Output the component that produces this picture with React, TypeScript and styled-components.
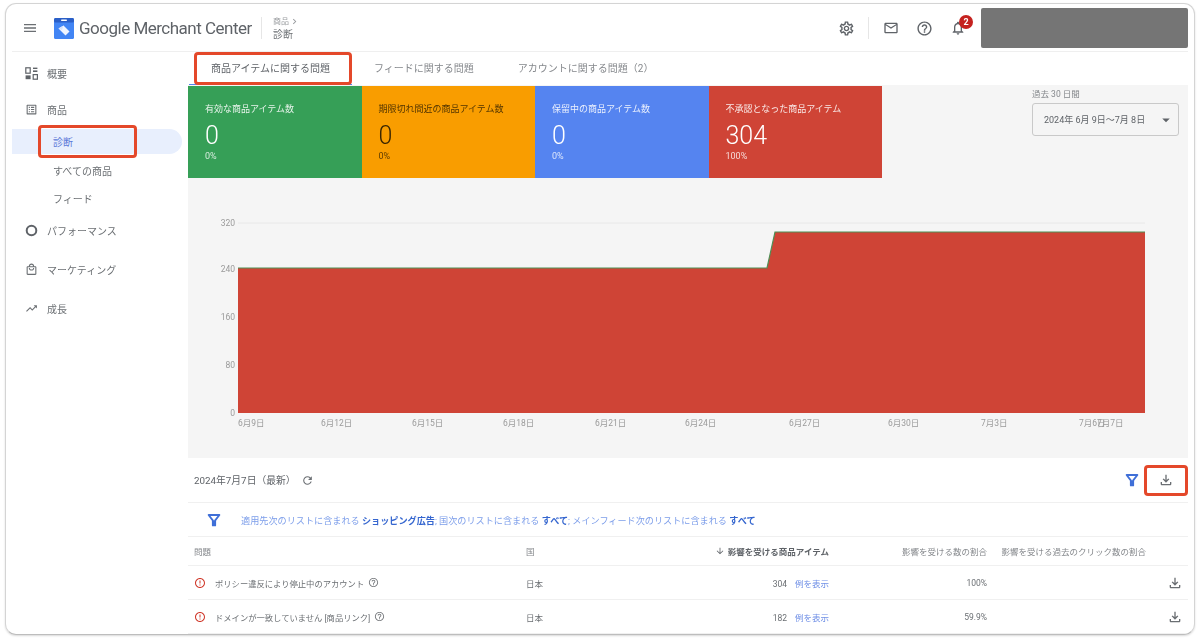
import React from 'react';
import styled, { createGlobalStyle } from 'styled-components';
import {
  MdMenu,
  MdOutlineSettings,
  MdMailOutline,
  MdHelpOutline,
  MdOutlineNotifications,
  MdListAlt,
  MdOutlineLocalMall,
  MdTrendingUp,
  MdArrowDropDown,
  MdArrowDownward,
  MdRefresh,
  MdOutlineFileDownload,
  MdErrorOutline,
  MdChevronRight,
} from 'react-icons/md';

const GlobalStyle = createGlobalStyle`
  html, body {
    margin: 0;
    padding: 0;
    background: #fff;
    font-family: Roboto, "Noto Sans CJK JP", sans-serif;
    color: #5f6368;
  }
  * { box-sizing: border-box; }
`;

const Page = styled.div`
  width: 1200px;
  height: 642px;
  padding: 3px 5px 7px 5px;
  overflow: hidden;
`;

const Frame = styled.div`
  height: 632px;
  padding: 1px 6px 0;
  border: 1px solid #d4d4d4;
  border-bottom-color: #bdbdbd;
  border-radius: 11px;
  box-shadow: 0 1px 2px rgba(0, 0, 0, 0.15);
  overflow: hidden;
  filter: blur(0.3px);
`;

const Header = styled.header`
  height: 47px;
  display: flex;
  align-items: center;
  border-bottom: 1px solid #efefef;
  padding-left: 10px;
`;

const MenuButton = styled.div`
  width: 16px;
  display: flex;
  margin-right: 16px;
  color: #6b6f73;
`;

const Brand = styled.div`
  font-family: Roboto, "Open Sans", sans-serif;
  font-size: 17px;
  letter-spacing: -0.5px;
  color: #5f6368;
  margin-left: 5px;
  white-space: nowrap;
  width: 182px;
`;

const VDivider = styled.div<{ $h: number }>`
  width: 1px;
  height: ${p => p.$h}px;
  background: #e6e6e6;
`;

const Crumbs = styled.div`
  margin-left: 11px;
  display: flex;
  flex-direction: column;
  gap: 2px;
`;

const CrumbTop = styled.div`
  font-size: 8px;
  color: #9a9da0;
  display: flex;
  align-items: center;
  line-height: 11px;
`;

const CrumbCurrent = styled.div`
  font-size: 10px;
  color: #6b6f73;
  line-height: 12px;
`;

const HeaderTools = styled.div`
  margin-left: auto;
  display: flex;
  align-items: center;
  color: #5f6368;
`;

const ToolIcon = styled.div<{ $ml: number }>`
  margin-left: ${p => p.$ml}px;
  display: flex;
  position: relative;
`;

const Badge = styled.span`
  position: absolute;
  top: -5px;
  right: -7px;
  width: 14px;
  height: 14px;
  border-radius: 50%;
  background: #c5221f;
  color: #fff;
  font-size: 9px;
  font-weight: 700;
  display: flex;
  align-items: center;
  justify-content: center;
`;

const AccountBox = styled.div`
  width: 207px;
  height: 40px;
  background: #757575;
  border-radius: 2px;
  margin-left: 15px;
`;

const Body = styled.div`
  display: flex;
  height: 583px;
`;

const Sidebar = styled.nav`
  width: 176px;
  flex: none;
  padding: 3px 6px 0 0;
`;

const NavItem = styled.div<{ $h?: number }>`
  height: ${p => p.$h ?? 36}px;
  display: flex;
  align-items: center;
  padding-left: 13px;
  gap: 9px;
  font-size: 10px;
  color: #6b6f73;
`;

const SubItem = styled.div<{ $active?: boolean; $h: number }>`
  position: relative;
  height: ${p => p.$h}px;
  margin: ${p => (p.$active ? '2px 0' : '0')};
  display: flex;
  align-items: center;
  padding-left: 41px;
  font-size: 10px;
  color: ${p => (p.$active ? '#5b78d8' : '#6b6f73')};
  background: ${p => (p.$active ? '#e8effd' : 'transparent')};
  border-radius: ${p => (p.$active ? '0 13px 13px 0' : '0')};
`;

const Highlight = styled.div`
  position: absolute;
  border: 3px solid #e4482a;
  border-radius: 4px;
  pointer-events: none;
`;

const SideHighlight = styled(Highlight)`
  left: 26px;
  top: -4px;
  width: 99px;
  height: 33px;
`;

const Main = styled.main`
  width: 1000px;
  display: flex;
  flex-direction: column;
`;

const Tabs = styled.div`
  height: 33px;
  display: flex;
  padding-left: 1px;
  background: #fff;
`;

const Tab = styled.div<{ $active?: boolean }>`
  position: relative;
  padding: 0 22px 2px;
  display: flex;
  align-items: center;
  font-size: 10px;
  color: ${p => (p.$active ? '#5f6368' : '#85888c')};
  box-shadow: ${p => (p.$active ? 'inset 0 -1px 0 #5584f0' : 'none')};
`;

const TabHighlight = styled(Highlight)`
  left: 5px;
  right: 0;
  top: 0;
  bottom: 0;
`;

const GrayPanel = styled.section`
  height: 373px;
  background: #f5f5f5;
  display: flex;
  flex-direction: column;
`;

const TopRow = styled.div`
  height: 93px;
  flex: none;
  display: flex;
  justify-content: space-between;
  padding: 1px 9px 0 0;
`;

const Tiles = styled.div`
  display: flex;
`;

const Tile = styled.div<{ $bg: string; $fg: string }>`
  width: 173.5px;
  height: 92px;
  background: ${p => p.$bg};
  color: ${p => p.$fg};
  padding: 17px 0 0 17px;
`;

const TileLabel = styled.div`
  font-size: 9px;
  line-height: 12px;
  opacity: 0.88;
`;

const TileValue = styled.div`
  font-size: 25px;
  font-weight: 300;
  line-height: 26px;
  margin-top: 8px;
`;

const TilePct = styled.div`
  font-size: 9px;
  line-height: 11px;
  opacity: 0.8;
  margin-top: 2px;
`;

const RangeCol = styled.div`
  width: 147px;
  padding-top: 2px;
`;

const RangeLabel = styled.div`
  font-size: 8.5px;
  line-height: 12px;
  color: #85888c;
  margin-bottom: 3px;
`;

const RangeSelect = styled.div`
  height: 33px;
  border: 1px solid #c9c9c9;
  border-radius: 3px;
  display: flex;
  align-items: center;
  padding-left: 11px;
  font-size: 9px;
  color: #5f6368;
  white-space: nowrap;
  gap: 12px;
`;

const Chart = styled.svg`
  display: block;
  width: 1000px;
  height: 280px;
`;

const AxisLabel = styled.text`
  font-size: 8.5px;
  fill: #9a9a9a;
`;

const Toolbar = styled.div`
  height: 45px;
  flex: none;
  display: flex;
  align-items: center;
  padding-left: 6px;
  border-bottom: 1px solid #f0f0f0;
  font-size: 9.8px;
  color: #5f6368;
`;

const RefreshIcon = styled(MdRefresh)`
  margin-left: 5px;
  color: #6b6f73;
`;

const ToolbarRight = styled.div`
  margin-left: auto;
  display: flex;
  align-items: center;
  gap: 4px;
`;

const DownloadButton = styled.div`
  width: 44px;
  height: 31px;
  border: 3px solid #e4482a;
  border-radius: 4px;
  display: flex;
  align-items: center;
  justify-content: center;
  color: #6b6f73;
`;

const FilterRow = styled.div`
  height: 34px;
  flex: none;
  display: flex;
  align-items: center;
  padding-left: 18px;
  gap: 19px;
  border-bottom: 1px solid #f0f0f0;
  font-size: 9.15px;
  color: #7d9eea;
  white-space: nowrap;
`;

const Strong = styled.b`
  color: #3566cf;
  font-weight: 700;
`;

const TableRow = styled.div<{ $h: number }>`
  height: ${p => p.$h}px;
  flex: none;
  display: grid;
  grid-template-columns: 332px 120px 183px 158px 159px 42px;
  align-items: center;
  padding-left: 6px;
  border-bottom: 1px solid #f0f0f0;
  font-size: 8.5px;
  color: #6b6f73;
  white-space: nowrap;
`;

const HeadCell = styled.div<{ $right?: boolean; $bold?: boolean }>`
  font-weight: ${p => (p.$bold ? 700 : 400)};
  color: ${p => (p.$bold ? '#5f6368' : '#85888c')};
  display: flex;
  align-items: center;
  justify-content: ${p => (p.$right ? 'flex-end' : 'flex-start')};
  gap: 3px;
`;

const IssueCell = styled.div`
  display: flex;
  align-items: center;
  gap: 9px;
  font-size: 8.3px;
`;

const ErrorIcon = styled(MdErrorOutline)`
  color: #d0392b;
`;

const HelpIcon = styled(MdHelpOutline)`
  color: #7a7d80;
  margin-left: -5px;
`;

const RightCell = styled.div`
  text-align: right;
`;

const ExampleLink = styled.span`
  color: #6f8fe6;
  margin-left: 8px;
`;

const RowDownload = styled.div`
  display: flex;
  justify-content: flex-end;
  padding-right: 5px;
  color: #6b6f73;
`;

const Logo: React.FC = () => (
  <svg width="20" height="21" viewBox="0 0 20 21">
    <rect x="0" y="0" width="20" height="21" rx="1.5" fill="#4285f4" />
    <rect x="0" y="0" width="20" height="4.5" rx="1.5" fill="#2b5fc7" />
    <rect x="7" y="1.6" width="6" height="1.4" rx="0.7" fill="#fff" />
    <path d="M4.5 10.5 L9.5 7.5 L15.5 13.5 L11.5 17.5 Z" fill="#fff" opacity="0.92" />
    <path d="M4.5 10.5 L9.5 7.5 L8 12 Z" fill="#d6e2fb" />
  </svg>
);

const OverviewIcon: React.FC = () => (
  <svg width="13" height="13" viewBox="0 0 13 13" fill="none" stroke="#5f6368" strokeWidth="1.2">
    <rect x="0.8" y="0.8" width="4.4" height="5.4" />
    <rect x="8" y="0.6" width="4.4" height="1.4" fill="#5f6368" stroke="none" />
    <rect x="8" y="3.4" width="4.4" height="1.6" fill="#5f6368" stroke="none" />
    <rect x="0.6" y="8.4" width="5" height="3.8" fill="#5f6368" stroke="none" />
    <rect x="8.2" y="7.6" width="4.2" height="4.6" />
  </svg>
);

const RingIcon: React.FC = () => (
  <svg width="13" height="13" viewBox="0 0 13 13">
    <circle cx="6.5" cy="6.5" r="4.8" fill="none" stroke="#5f6368" strokeWidth="2" />
  </svg>
);

const FunnelIcon: React.FC = () => (
  <svg width="16" height="16" viewBox="0 0 16 16">
    <path d="M2.6 3 H13.4 L9.2 8.4 V13.4 H6.8 V8.4 Z" fill="none" stroke="#3f6fd8" strokeWidth="1.8" strokeLinejoin="round" />
    <rect x="6.8" y="8.4" width="2.4" height="5" fill="#3f6fd8" />
  </svg>
);

const tiles = [
  { label: '有効な商品アイテム数', value: '0', pct: '0%', bg: '#369f57', fg: '#fff' },
  { label: '期限切れ間近の商品アイテム数', value: '0', pct: '0%', bg: '#f99d00', fg: '#3a2600' },
  { label: '保留中の商品アイテム数', value: '0', pct: '0%', bg: '#5584f0', fg: '#fff' },
  { label: '不承認となった商品アイテム', value: '304', pct: '100%', bg: '#cf4436', fg: '#fff' },
];

const yTicks = [
  { label: '320', y: 223 },
  { label: '240', y: 269 },
  { label: '160', y: 317 },
  { label: '80', y: 365 },
  { label: '0', y: 413 },
];

const xTicks = [
  { label: '6月9日', x: 238 },
  { label: '6月12日', x: 321 },
  { label: '6月15日', x: 412 },
  { label: '6月18日', x: 503 },
  { label: '6月21日', x: 595 },
  { label: '6月24日', x: 685 },
  { label: '6月27日', x: 789 },
  { label: '6月30日', x: 888 },
  { label: '7月3日', x: 981 },
  { label: '7月6日', x: 1079 },
  { label: '7月7日', x: 1097 },
];

const issues = [
  { title: 'ポリシー違反により停止中のアカウント', count: '304', share: '100%' },
  { title: 'ドメインが一致していません [商品リンク]', count: '182', share: '59.9%' },
];

const App: React.FC = () => {
  return (
    <Page>
      <GlobalStyle />
      <Frame>
        <Header>
          <MenuButton>
            <MdMenu size={16} />
          </MenuButton>
          <Logo />
          <Brand>Google Merchant Center</Brand>
          <VDivider $h={22} />
          <Crumbs>
            <CrumbTop>
              商品
              <MdChevronRight size={11} />
            </CrumbTop>
            <CrumbCurrent>診断</CrumbCurrent>
          </Crumbs>
          <HeaderTools>
            <ToolIcon $ml={0}>
              <MdOutlineSettings size={17} />
            </ToolIcon>
            <ToolIcon $ml={13}>
              <VDivider $h={22} />
            </ToolIcon>
            <ToolIcon $ml={14}>
              <MdMailOutline size={16} />
            </ToolIcon>
            <ToolIcon $ml={17}>
              <MdHelpOutline size={17} />
            </ToolIcon>
            <ToolIcon $ml={17}>
              <MdOutlineNotifications size={16} />
              <Badge>2</Badge>
            </ToolIcon>
            <AccountBox />
          </HeaderTools>
        </Header>
        <Body>
          <Sidebar>
            <NavItem>
              <OverviewIcon />
              概要
            </NavItem>
            <NavItem>
              <MdListAlt size={13} />
              商品
            </NavItem>
            <SubItem $active $h={25}>
              診断
              <SideHighlight />
            </SubItem>
            <SubItem $h={28}>すべての商品</SubItem>
            <SubItem $h={28}>フィード</SubItem>
            <NavItem>
              <RingIcon />
              パフォーマンス
            </NavItem>
            <NavItem $h={42}>
              <MdOutlineLocalMall size={13} />
              マーケティング
            </NavItem>
            <NavItem $h={37}>
              <MdTrendingUp size={13} />
              成長
            </NavItem>
          </Sidebar>
          <Main>
            <Tabs>
              <Tab $active>
                商品アイテムに関する問題
                <TabHighlight />
              </Tab>
              <Tab>フィードに関する問題</Tab>
              <Tab>アカウントに関する問題（2）</Tab>
            </Tabs>
            <GrayPanel>
              <TopRow>
                <Tiles>
                  {tiles.map(t => (
                    <Tile key={t.label} $bg={t.bg} $fg={t.fg}>
                      <TileLabel>{t.label}</TileLabel>
                      <TileValue>{t.value}</TileValue>
                      <TilePct>{t.pct}</TilePct>
                    </Tile>
                  ))}
                </Tiles>
                <RangeCol>
                  <RangeLabel>過去 30 日間</RangeLabel>
                  <RangeSelect>
                    2024年 6月 9日～7月 8日
                    <MdArrowDropDown size={18} />
                  </RangeSelect>
                </RangeCol>
              </TopRow>
              <Chart viewBox="188 178 1000 280">
                <line x1="238" x2="1145" y1="223" y2="223" stroke="#e8e8e8" strokeWidth="1" />
                <path d="M238 268 H767 L775 232 H1145 V413 H238 Z" fill="#cf4436" />
                <path d="M238 268 H767 L775 232 H1145" fill="none" stroke="#4f8f55" strokeWidth="1.2" />
                {yTicks.map(t => (
                  <AxisLabel key={t.label} x="235" y={t.y + 3} textAnchor="end">
                    {t.label}
                  </AxisLabel>
                ))}
                {xTicks.map(t => (
                  <AxisLabel key={t.label} x={t.x} y="426">
                    {t.label}
                  </AxisLabel>
                ))}
              </Chart>
            </GrayPanel>
            <Toolbar>
              2024年7月7日（最新）
              <RefreshIcon size={13} />
              <ToolbarRight>
                <FunnelIcon />
                <DownloadButton>
                  <MdOutlineFileDownload size={16} />
                </DownloadButton>
              </ToolbarRight>
            </Toolbar>
            <FilterRow>
              <FunnelIcon />
              <span>
                適用先次のリストに含まれる <Strong>ショッピング広告</Strong>; 国次のリストに含まれる{' '}
                <Strong>すべて</Strong>; メインフィード次のリストに含まれる <Strong>すべて</Strong>
              </span>
            </FilterRow>
            <TableRow $h={29}>
              <HeadCell>問題</HeadCell>
              <HeadCell>国</HeadCell>
              <HeadCell $right $bold>
                <MdArrowDownward size={10} />
                影響を受ける商品アイテム
              </HeadCell>
              <HeadCell $right>影響を受ける数の割合</HeadCell>
              <HeadCell $right>影響を受ける過去のクリック数の割合</HeadCell>
              <div />
            </TableRow>
            {issues.map(issue => (
              <TableRow key={issue.count} $h={34}>
                <IssueCell>
                  <ErrorIcon size={12} />
                  {issue.title}
                  <HelpIcon size={11} />
                </IssueCell>
                <div>日本</div>
                <RightCell>
                  {issue.count}
                  <ExampleLink>例を表示</ExampleLink>
                </RightCell>
                <RightCell>{issue.share}</RightCell>
                <div />
                <RowDownload>
                  <MdOutlineFileDownload size={16} />
                </RowDownload>
              </TableRow>
            ))}
          </Main>
        </Body>
      </Frame>
    </Page>
  );
};

export default App;
